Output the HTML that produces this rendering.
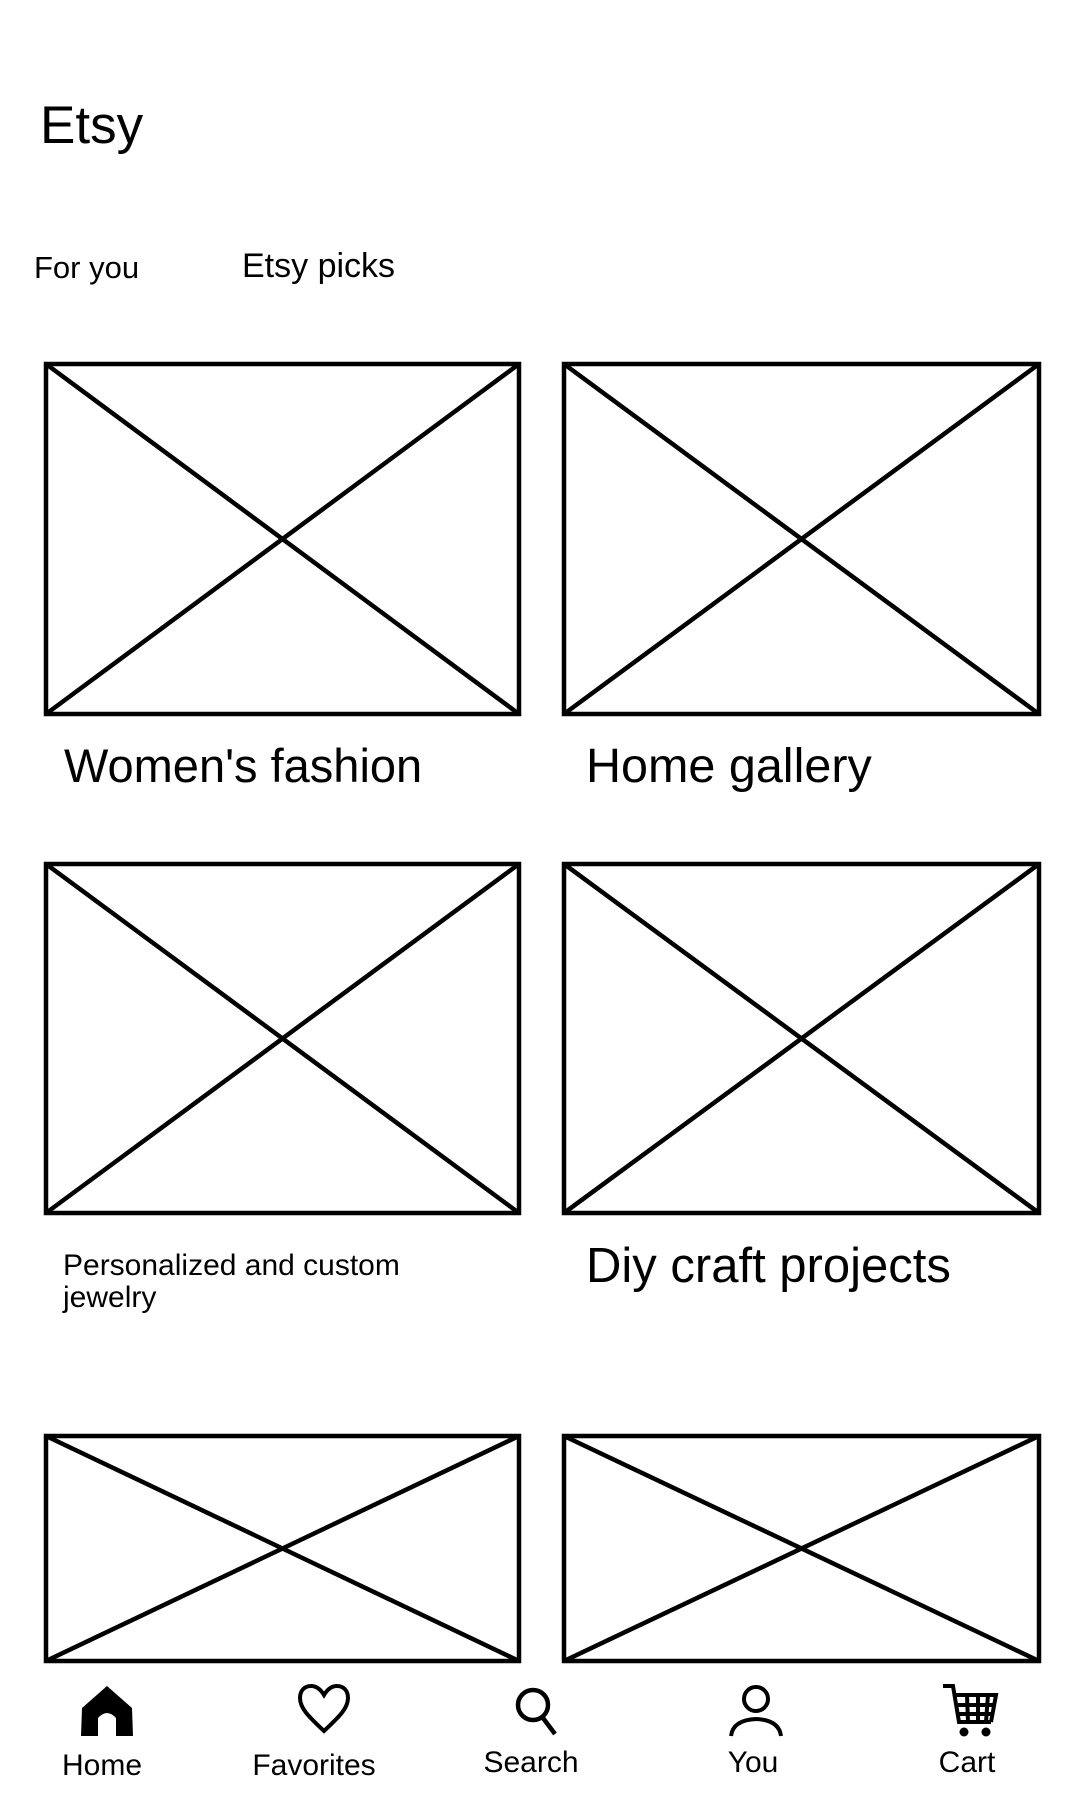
<!DOCTYPE html>
<html><head><meta charset="utf-8"><style>
html,body{margin:0;padding:0;background:#fff;width:1080px;height:1800px;overflow:hidden}
svg{display:block}
text{font-family:"Liberation Sans",Arial,sans-serif;fill:#000}
</style></head><body>
<svg width="1080" height="1800" viewBox="0 0 1080 1800" xmlns="http://www.w3.org/2000/svg">
<text x="40" y="143" font-size="53">Etsy</text>
<text x="34" y="278" font-size="31">For you</text>
<text x="242" y="277" font-size="34">Etsy picks</text>
<g fill="none" stroke="#000" stroke-width="4.5">
<rect x="46" y="364" width="473" height="350"/><path d="M46 364L519 714M519 364L46 714"/>
<rect x="564" y="364" width="475" height="350"/><path d="M564 364L1039 714M1039 364L564 714"/>
<rect x="46" y="864" width="473" height="349"/><path d="M46 864L519 1213M519 864L46 1213"/>
<rect x="564" y="864" width="475" height="349"/><path d="M564 864L1039 1213M1039 864L564 1213"/>
<rect x="46" y="1436" width="473" height="225"/><path d="M46 1436L519 1661M519 1436L46 1661"/>
<rect x="564" y="1436" width="475" height="225"/><path d="M564 1436L1039 1661M1039 1436L564 1661"/>
</g>
<text x="64" y="782" font-size="47">Women's fashion</text>
<text x="586" y="782" font-size="48.5">Home gallery</text>
<text x="63" y="1275" font-size="30">Personalized and custom</text>
<text x="63" y="1307" font-size="30">jewelry</text>
<text x="586" y="1282" font-size="49">Diy craft projects</text>
<!-- nav icons -->
<path d="M107 1686L132 1708L133 1736L116 1736L116 1718Q107 1708 98 1718L98 1736L81 1736L82 1708Z" fill="#000"/>
<path d="M324 1731C308 1716 300 1708 300 1698C300 1690 305 1686 311 1686C317 1686 321 1690 324 1695C327 1690 331 1686 337 1686C343 1686 348 1690 348 1698C348 1708 340 1716 324 1731Z" fill="none" stroke="#000" stroke-width="4"/>
<circle cx="533" cy="1705" r="15" fill="none" stroke="#000" stroke-width="4.5"/>
<path d="M543 1718L555 1734" stroke="#000" stroke-width="4.5"/>
<circle cx="756" cy="1699" r="12" fill="none" stroke="#000" stroke-width="4"/>
<path d="M731 1736Q733 1720 756 1719Q779 1720 781 1736" fill="none" stroke="#000" stroke-width="4"/>
<g fill="none" stroke="#000" stroke-width="4">
<path d="M943 1686L953 1686L959 1722L991 1722"/>
<path d="M954 1695L996 1695L991 1722"/>
<path d="M958 1705L994 1705M956 1714L992 1714M967 1695L968 1722M978 1695L978 1722M988 1695L986 1722"/>
</g>
<circle cx="964" cy="1732" r="4.5" fill="#000"/><circle cx="986" cy="1732" r="4.5" fill="#000"/>
<text x="102" y="1775" font-size="30" text-anchor="middle">Home</text>
<text x="314" y="1775" font-size="30" text-anchor="middle">Favorites</text>
<text x="531" y="1772" font-size="30" text-anchor="middle">Search</text>
<text x="753" y="1772" font-size="30" text-anchor="middle">You</text>
<text x="967" y="1772" font-size="30" text-anchor="middle">Cart</text>
</svg>
</body></html>
